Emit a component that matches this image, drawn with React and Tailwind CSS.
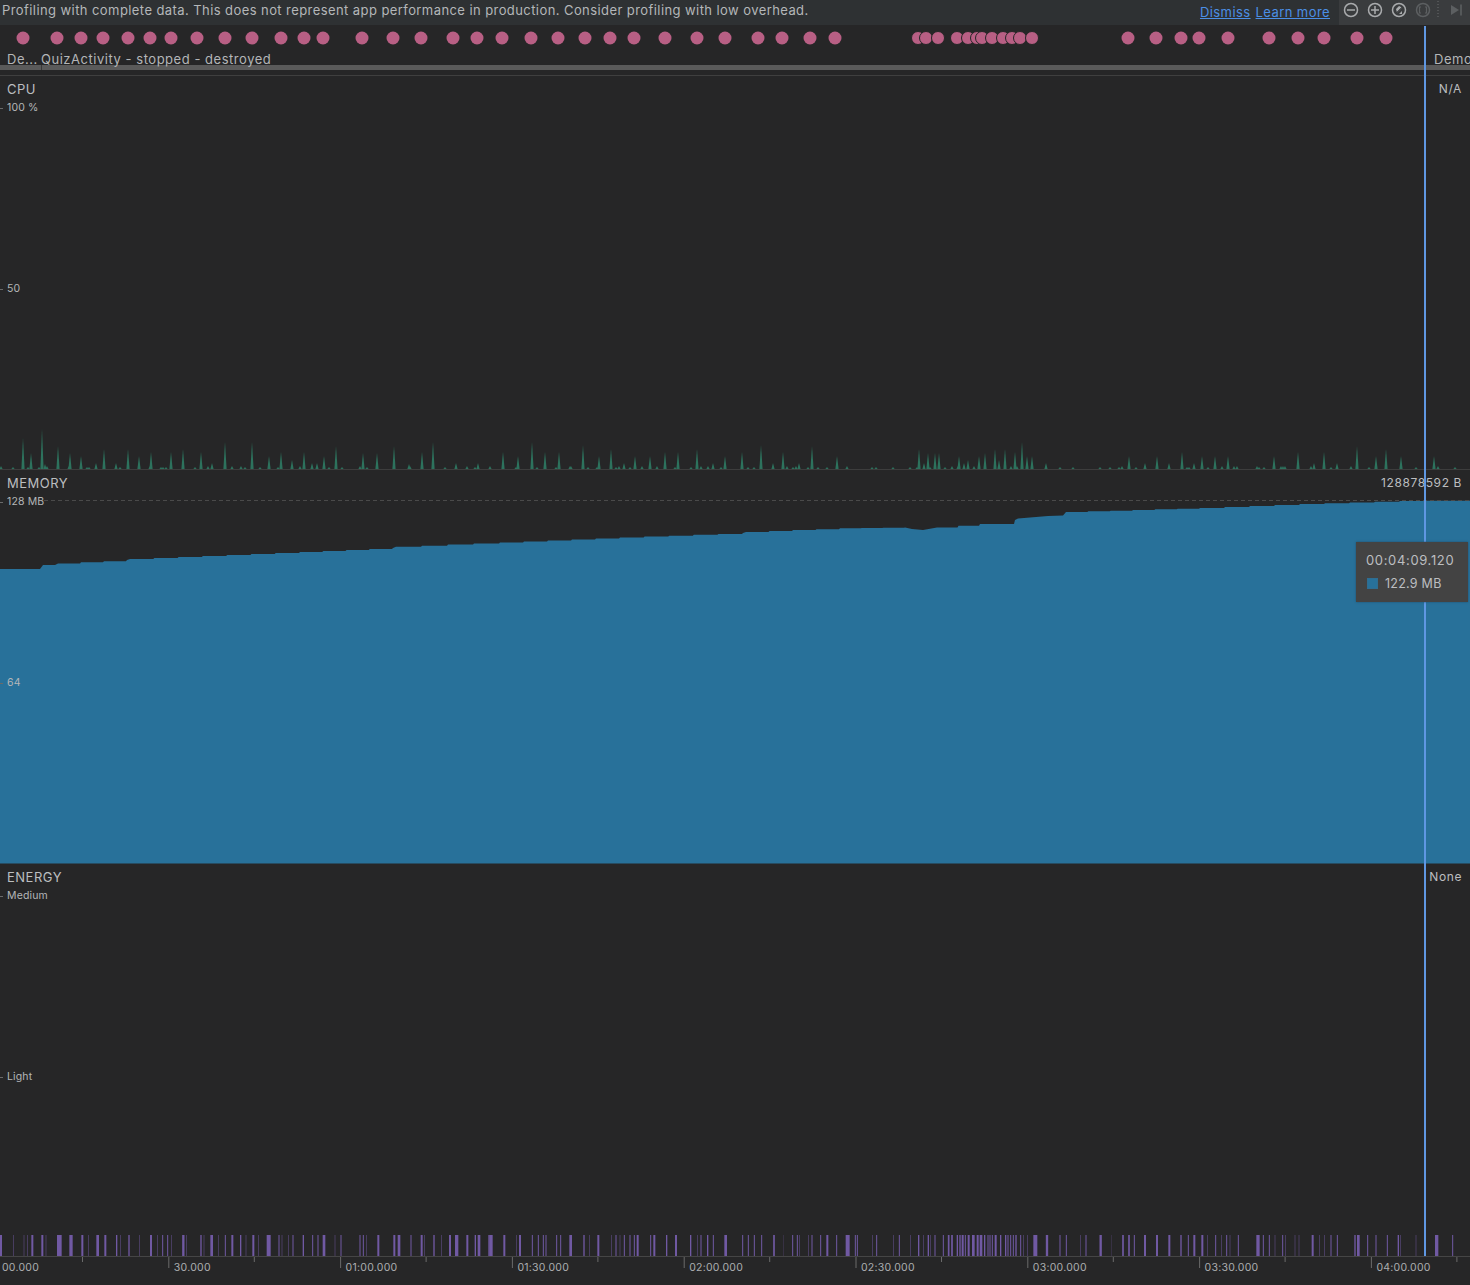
import React from "react";

const dots = [23,57,81,103,128,150,171,197,225,252,281,304,323,362,393,421,453,477,502,531,558,585,610,634,665,697,725,758,782,810,835,918,926,938,957,968,977,982,992,1003,1012,1020,1032,1128,1156,1181,1199,1228,1269,1298,1324,1357,1386];

const spikes = [[23,31],[31,16],[42,40],[45,5],[58,23],[70,16],[81,13],[96,6],[104,20],[116,6],[128,20],[139,13],[151,17],[171,17],[183,20],[201,17],[212,6],[225,27],[252,27],[269,13],[281,17],[292,9],[304,17],[312,6],[317,6],[324,13],[336,23],[363,16],[377,16],[394,23],[409,5],[422,17],[433,27],[456,6],[478,6],[503,17],[518,13],[532,27],[545,17],[559,17],[571,3],[583,24],[599,13],[611,20],[624,6],[635,13],[650,13],[665,17],[678,17],[697,20],[713,6],[725,13],[742,17],[761,24],[773,6],[783,17],[799,6],[812,23],[837,13],[847,3],[919,20],[924,6],[928,16],[935,16],[939,16],[959,13],[964,6],[968,9],[974,3],[979,13],[985,16],[995,20],[999,9],[1005,20],[1011,3],[1015,17],[1022,27],[1027,13],[1032,13],[1046,6],[1100,2],[1129,13],[1145,6],[1157,13],[1169,6],[1182,17],[1194,6],[1202,13],[1215,13],[1228,13],[1257,3],[1274,13],[1283,3],[1298,17],[1314,6],[1324,17],[1337,6],[1357,23],[1376,13],[1386,20],[1401,13],[1434,13],[1438,3],
[1,3],[13,2],[28,2],[39,2],[47,3],[69,3],[87,2],[89,2],[120,2],[150,3],[161,2],[163,2],[166,2],[195,2],[208,3],[232,3],[241,3],[245,2],[260,2],[278,2],[300,3],[329,2],[342,2],[360,3],[367,2],[410,3],[445,2],[467,3],[475,2],[490,3],[516,2],[537,2],[556,2],[570,3],[588,2],[597,2],[616,2],[619,3],[630,2],[642,3],[657,3],[675,2],[691,2],[701,3],[708,3],[721,2],[748,2],[754,2],[787,3],[793,2],[796,3],[808,2],[818,2],[827,2],[872,2],[876,2],[893,2],[910,2],[917,2],[930,2],[945,2],[952,3],[958,3],[1017,3],[1060,2],[1073,2],[1119,2],[1110,2],[1122,3],[1136,2],[1187,2],[1189,2],[1208,2],[1222,3],[1234,3],[1237,3],[1259,2],[1264,2],[1281,3],[1285,3],[1311,3],[1331,2],[1351,3],[1369,2],[1416,2],[1455,2]];

const memoryPoints = [[0,569],[40,569],[43,565],[55,565],[58,563.5],[127,560],[130,559],[300,552],[393,548],[396,546.7],[500,542.5],[620,537.5],[743,533],[746,532],[840,528.2],[905,527.5],[912,529],[923,530],[937,527.5],[980,524],[1015,520],[1018,518.5],[1048,516],[1063,515.5],[1066,512],[1200,508],[1300,504],[1400,501],[1470,500.5]];

function memoryPath() {
  const out = [];
  for (let i = 0; i < memoryPoints.length - 1; i++) {
    const [x0, y0] = memoryPoints[i];
    const [x1, y1] = memoryPoints[i + 1];
    const span = x1 - x0;
    if (span <= 30) {
      out.push(`L${x0} ${y0}`);
      continue;
    }
    const n = Math.round(span / 24);
    for (let k = 0; k < n; k++) {
      const xa = x0 + (span * k) / n;
      const xb = x0 + (span * (k + 1)) / n;
      const y = y0 + ((y1 - y0) * k) / n;
      out.push(`L${xa} ${y}L${xb - 1} ${y}`);
    }
  }
  out.push("L1470 500.5");
  return `M0 863.5${out.join("")}L1470 863.5Z`;
}

const bars = [
  [0,[3,6],[40,2],[72,2],[83,2],[97,6],[127,6],[138,2],[178,14],[213,10],[247,6],[265,2],[293,8],[316,6],[350,4],[362,2],[387,4],[418,2],[453,6],[472,2],[488,3],[503,3],[515,2],[550,7],[560,2],[603,4],[612,2],[635,8],[655,2],[676,3],[697,6],[722,4],[738,2],[760,6],[775,2],[806,12],[837,3],[846,2],[865,2],[879,3],[910,4],[938,3],[954,3],[972,8],[1005,2],[1023,3],[1080,3],[1090,3],[1100,2],[1135,6],[1183,6],[1197,8],[1233,3],[1265,6],[1274,2],[1302,4],[1325,2],[1350,6],[1370,10],[1402,6],[1426,4],[1437,8],[1467,4]],
  [490,[3,10],[43,6],[80,2],[90,6],[127,3],[145,3],[160,3],[168,3],[200,3],[212,3],[242,8],[282,4],[298,2],[325,6],[365,2],[378,3],[390,2],[403,3],[420,3],[433,3],[443,6],[482,3],[493,6],[530,4],[558,6],[602,4],[622,2],[633,3],[653,4],[670,3],[707,8],[758,3],[775,3],[793,3],[815,3],[852,5],[880,1],[908,3],[922,3],[928,2],[955,2],[966,3],[992,3],[1012,6],[1040,3],[1073,12],[1096,3],[1102,3],[1148,2],[1160,3],[1210,2],[1228,3],[1262,2],[1286,4],[1300,2],[1315,4],[1322,2],[1335,3],[1360,3],[1376,5],[1386,5],[1402,4],[1410,4],[1418,6],[1426,3],[1436,6],[1450,8],[1463,6]],
  [980,[3,8],[14,4],[24,3],[30,3],[37,3],[47,6],[62,4],[77,4],[84,3],[92,3],[100,3],[108,4],[122,3],[130,2],[142,2],[166,12],[201,7],[240,3],[259,3],[302,2],[318,3],[362,7],[394,1],[429,5],[447,5],[463,3],[495,6],[531,6],[568,6],[603,4],[625,3],[643,6],[667,6],[683,2],[707,3],[725,2],[740,3],[750,2],[775,3],[834,10],[850,3],[868,3],[885,2],[908,3],[917,2],[945,2],[957,2],[998,6],[1018,2],[1034,2],[1053,3],[1072,3],[1125,4],[1135,8],[1163,3],[1188,3],[1222,3],[1255,4],[1262,2],[1308,2],[1370,10],[1418,3]],
].flatMap(([off, ...items]) => items.map(([x, w]) => [off + (x - w / 2) / 3, w / 3]));

const timeLabels = ["00.000","30.000","01:00.000","01:30.000","02:00.000","02:30.000","03:00.000","03:30.000","04:00.000"];

function YLabel({ children, className = "" }) {
  return (
    <div className={`flex items-center h-[14px] text-[10.5px] text-[#b4b6b8] tracking-[0.15px] ${className}`}>
      <span className="w-[3px] h-px bg-[#6a6a6a] mr-[4px]" />
      {children}
    </div>
  );
}

function PanelHead({ title, value }) {
  return (
    <div className="flex justify-between items-center h-[16px] pl-[7px] pr-[8px] text-[#bcbec0]">
      <span className="text-[13px] leading-none tracking-[0.5px]">{title}</span>
      <span className="text-[12px] leading-none tracking-[0.6px]">{value}</span>
    </div>
  );
}

function ToolIcons() {
  return (
    <svg width="131" height="25" viewBox="1339 0 131 25" fill="none">
      <g stroke="#a9abad" strokeWidth="1.5">
        <circle cx="1351" cy="10" r="6.5" />
        <path d="M1347 10h8" />
        <circle cx="1375" cy="10" r="6.5" />
        <path d="M1371 10h8M1375 6v8" />
        <circle cx="1399" cy="10" r="6.5" />
      </g>
      <path d="M1396 9l3-3 3 1.5-5 5zM1402 11l-3 3 3 0z" fill="#a9abad" />
      <path d="M1395.5 13.5l7-7" stroke="#3a3c3e" strokeWidth="0.8" />
      <circle cx="1423" cy="10" r="6.5" stroke="#5c5f61" strokeWidth="1.5" />
      <path d="M1421 7h-1.5v6h1.5M1425 7h1.5v6h-1.5" stroke="#5c5f61" strokeWidth="1.2" />
      <path d="M1438 1v18" stroke="#6a6c6e" strokeDasharray="1 2" />
      <path d="M1451 5l8 5-8 5z" fill="#5c5f61" />
      <path d="M1461 4.5v11" stroke="#5c5f61" strokeWidth="1.6" />
    </svg>
  );
}

export default function App() {
  return (
    <div className="relative w-[1470px] h-[1285px] overflow-hidden bg-[#262627] font-['Inter','Liberation_Sans',sans-serif]">
      {/* message bar */}
      <div className="flex h-[25px] bg-[#2e3133]">
        <div className="flex-1 flex items-center justify-between pl-[2px] pr-[9px] pb-[3px] text-[13px] text-[#b4b7b9] tracking-[0.42px] whitespace-nowrap">
          <span>Profiling with complete data. This does not represent app performance in production. Consider profiling with low overhead.</span>
          <span className="flex gap-[5px] text-[#4b8fe6] underline pt-[3px]">
            <span>Dismiss</span>
            <span>Learn more</span>
          </span>
        </div>
        <div className="w-[131px] bg-[#3a3c3e]">
          <ToolIcons />
        </div>
      </div>

      {/* events */}
      <div className="h-[51px] border-b border-[#3f3f3f]">
        <svg width="1470" height="27" viewBox="0 25 1470 27" className="block">
          {dots.map((x, i) => (
            <circle key={i} cx={x} cy="38" r="6.5" fill="#b85f84" stroke="#262627" strokeWidth={x >= 918 && x <= 1032 ? 1 : 0} />
          ))}
        </svg>
        <div className="flex h-[13px] pt-[2px] items-center text-[13px] text-[#b4b6b8] tracking-[0.53px] whitespace-nowrap">
          <span className="w-[41px] pl-[7px]">De...</span>
          <span className="flex-1">QuizActivity - stopped - destroyed</span>
          <span className="w-[36px] overflow-hidden">Demo</span>
        </div>
        <div className="h-[5px] bg-[#5a5a5a] flex">
          <span className="ml-[41px] w-px h-full bg-[#3a3a3a]" />
        </div>
      </div>

      {/* CPU */}
      <section className="relative h-[394px] pt-[5px]">
        <svg width="1470" height="394" viewBox="0 76 1470 394" className="absolute inset-0">
          {spikes.map(([x, h], i) => (
            <path key={i} d={`M${x - 1.6} 469L${x} ${469 - h}L${x + 1.6} 469Z`} fill="#2d725d" />
          ))}
          <rect x="0" y="469" width="1470" height="1" fill="#3d3d3d" />
        </svg>
        <div className="relative">
          <PanelHead title="CPU" value="N/A" />
          <YLabel className="mt-[4px]">100 %</YLabel>
          <YLabel className="mt-[167px]">50</YLabel>
        </div>
      </section>

      {/* MEMORY */}
      <section className="relative h-[394px] pt-[5px]">
        <svg width="1470" height="394" viewBox="0 470 1470 394" className="absolute inset-0">
          <path d={memoryPath()} fill="#28719a" />
          <path d="M44 500.5H1470" stroke="#4a4a4a" strokeDasharray="4 3" />
        </svg>
        <div className="relative">
          <PanelHead title="MEMORY" value="128878592 B" />
          <YLabel className="mt-[4px]">128 MB</YLabel>
          <YLabel className="mt-[167px]">64</YLabel>
        </div>
      </section>

      {/* ENERGY */}
      <section className="relative h-[393px] pt-[5px]">
        <svg width="1470" height="393" viewBox="0 864 1470 393" className="absolute inset-0">
          {bars.map(([x, w], i) => (
            <rect key={i} x={x} y="1235" width={w} height="21" fill="#7059a3" fillOpacity={w < 1 ? 0.7 : 1} />
          ))}
          <rect x="0" y="1256" width="1470" height="1" fill="#454545" />
        </svg>
        <div className="relative">
          <PanelHead title="ENERGY" value="None" />
          <YLabel className="mt-[4px]">Medium</YLabel>
          <YLabel className="mt-[167px]">Light</YLabel>
        </div>
      </section>

      {/* time axis */}
      <div className="relative h-[28px]">
        <svg width="1470" height="28" className="absolute inset-0">
          {[0,1,2,3,4,5,6,7,8,9].map((i) => (
            <rect key={`m${i}`} x={82 + i * 171.8} y="0" width="1" height="5" fill="#6a6a6a" />
          ))}
          {[1,2,3,4,5,6,7,8].map((i) => (
            <rect key={`M${i}`} x={-3.5 + i * 171.8} y="0" width="1" height="11" fill="#6a6a6a" />
          ))}
        </svg>
        <div className="flex pl-[2px] pt-[3px] text-[10.5px] text-[#acaeb0] tracking-[0.25px] whitespace-nowrap">
          {timeLabels.map((t) => (
            <span key={t} className="w-[171.8px] shrink-0">{t}</span>
          ))}
        </div>
      </div>

      {/* cursor */}
      <div className="absolute left-[1424px] top-[26px] w-[2px] h-[1230px] bg-[#5f97e2]" />

      {/* tooltip */}
      <div className="absolute left-[1356px] top-[542px] w-[112px] h-[60px] bg-[#434343] shadow-[0_0_2px_#1f4f6c] px-[10px] pt-[10px] text-[#bcbec0]">
        <div className="text-[13px] leading-[17px] tracking-[0.65px]">00:04:09.120</div>
        <div className="flex items-center gap-[7px] mt-[6px] pl-px text-[12.5px] leading-[17px] tracking-[0.25px]">
          <span className="w-[11px] h-[11px] bg-[#28719a] border border-[#2f6d91]" />
          122.9 MB
        </div>
      </div>
    </div>
  );
}
